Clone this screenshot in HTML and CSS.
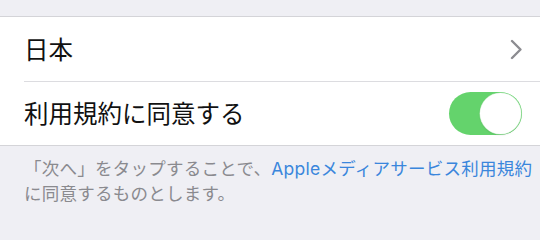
FILE: index.html
```html
<!DOCTYPE html>
<html lang="ja">
<head>
<meta charset="utf-8">
<link rel="stylesheet" href="styles.css">
</head>
<body>
<div class="top-band"></div>
<div class="group">
  <div class="row row-first">
    <span class="label">日本</span>
    <svg class="chevron" width="13" height="21" viewBox="0 0 13 21"><path d="M2 2 L10.5 10.5 L2 19" fill="none" stroke="#8c8c91" stroke-width="2.4" stroke-linecap="round" stroke-linejoin="round"/></svg>
  </div>
  <div class="row row-last">
    <span class="label">利用規約に同意する</span>
    <div class="switch on"><div class="knob"></div></div>
  </div>
</div>
<div class="footer">
  <p class="note">「次へ」をタップすることで、<a class="link">Appleメディアサービス利用規約</a><br>に同意するものとします。</p>
</div>
</body>
</html>
```
FILE: styles.css
```css
html, body {
  margin: 0;
  padding: 0;
}
body {
  background: #efeff4;
  width: 540px;
  height: 230px;
  overflow: hidden;
  font-family: "Inter", "Noto Sans CJK JP", sans-serif;
}
.top-band {
  height: 16px;
  border-bottom: 1px solid #d4d4d8;
}
.group {
  background: #ffffff;
  border-bottom: 1px solid #d4d4d8;
}
.row {
  display: flex;
  align-items: center;
  justify-content: space-between;
  margin-left: 24px;
  padding-right: 18px;
}
.row-first {
  height: 64px;
  border-bottom: 1px solid #dcdce0;
}
.row-last {
  height: 63px;
}
.label {
  font-family: "Noto Sans CJK JP", sans-serif;
  font-size: 24.5px;
  color: #111111;
  line-height: 1;
}
.chevron {
  display: block;
  margin-right: -1px;
}
.switch {
  width: 73px;
  height: 43px;
  border-radius: 22px;
  background: #64d36c;
  display: flex;
  align-items: center;
  justify-content: flex-end;
  padding: 0 1px;
  box-sizing: border-box;
}
.knob {
  width: 41px;
  height: 41px;
  border-radius: 50%;
  background: #ffffff;
  box-shadow: 0 0 0 0.5px #b9e6bb, 0 1px 2px rgba(0,0,0,0.12);
}
.footer {
  padding: 10px 4px 0 24px;
}
.note {
  margin: 0;
  font-size: 17.5px;
  line-height: 25px;
  letter-spacing: 0.25px;
  color: #8a8a8f;
  white-space: nowrap;
  font-family: "Inter", "Noto Sans CJK JP", sans-serif;
}
.link {
  color: #3a86dc;
  text-decoration: none;
}
```
